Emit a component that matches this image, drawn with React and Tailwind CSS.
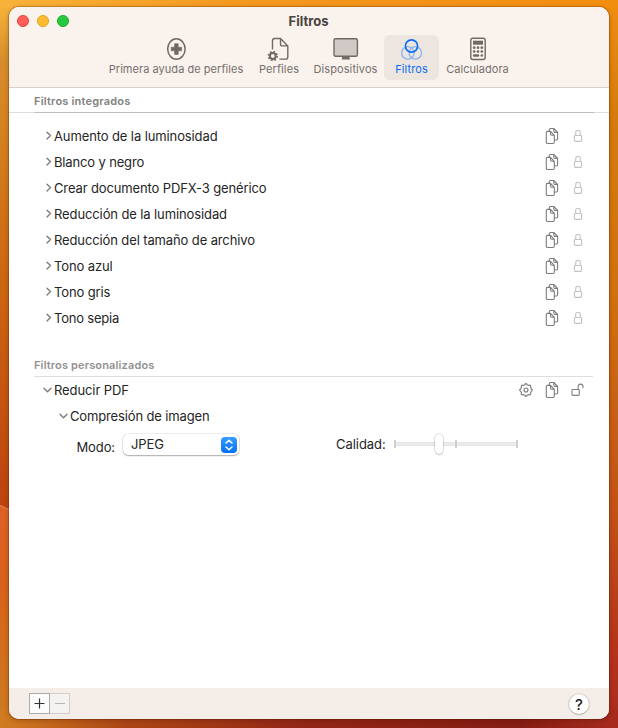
import React from "react";

const ROWS = [
  ["Aumento de la luminosidad", "tracking-[-0.11px]"],
  ["Blanco y negro", "tracking-[-0.15px]"],
  ["Crear documento PDFX-3 genérico", "tracking-[-0.13px]"],
  ["Reducción de la luminosidad", "tracking-[-0.11px]"],
  ["Reducción del tamaño de archivo", "tracking-[-0.12px]"],
  ["Tono azul", "tracking-[-0.12px]"],
  ["Tono gris", "tracking-[-0.12px]"],
  ["Tono sepia", "tracking-[-0.2px]"],
];

function FirstAidIcon() {
  return (
    <svg width="20" height="24" viewBox="0 0 20 24" fill="none">
      <ellipse cx="10.4" cy="12" rx="8.7" ry="10.2" stroke="#6f6a65" strokeWidth="1.5" />
      <path d="M8.6 6.7h3.6v3.6h3.4v3.5h-3.4v3.6H8.6v-3.6H5.2v-3.5h3.4z" fill="#6f6a65" stroke="#6f6a65" strokeWidth=".6" strokeLinejoin="round" />
    </svg>
  );
}

function ProfileIcon() {
  return (
    <svg width="24" height="26" viewBox="0 0 24 26" fill="none" stroke="#6f6a65">
      <path d="M5.500 13.500V4.700Q5.500 2.500 7.700 2.500H13.500l7.300 7.400v11q0 2.200-2.200 2.200H12.500M13.500 2.500v5.400q0 2 2 2h5.300" strokeWidth="1.4" strokeLinejoin="round" />
      <circle cx="5.800" cy="20" r="2.900" strokeWidth="2" />
      <circle cx="5.800" cy="20" r="4.400" strokeWidth="1.600" strokeDasharray="1.7 1.756" />
    </svg>
  );
}

function DisplayIcon() {
  return (
    <svg width="26" height="24" viewBox="0 0 26 24">
      <path d="M9.500 19h6.600l.9 3.600H8.600z" fill="#6f6a65" />
      <rect x="1" y="1.700" width="23.400" height="17.500" rx="1.500" fill="#d1c9c5" stroke="#6f6a65" strokeWidth="1.4" />
    </svg>
  );
}

function FiltersIcon() {
  return (
    <svg width="22" height="24" viewBox="0 0 22 24" fill="none" strokeWidth="1.3">
      <circle cx="6.900" cy="15.900" r="6.200" stroke="#8cb4ee" />
      <circle cx="14.300" cy="15.900" r="6.200" stroke="#8cb4ee" />
      <circle cx="10.500" cy="9" r="6.100" stroke="#0a6df0" strokeWidth="1.6" />
    </svg>
  );
}

function CalculatorIcon() {
  return (
    <svg width="18" height="24" viewBox="0 0 18 24" fill="#6f6a65">
      <rect x="1.8" y="1.2" width="14.4" height="21.3" rx="2" fill="none" stroke="#6f6a65" strokeWidth="1.4" />
      <rect x="4" y="3.7" width="10" height="4" />
      {[10.7, 14.5].map((y) =>
        [5.2, 9, 12.8].map((x) => <circle key={`${x}-${y}`} cx={x} cy={y} r="1.35" />)
      )}
      <rect x="3.9" y="17.2" width="6.3" height="2.5" rx="1.2" />
      <circle cx="12.8" cy="18.5" r="1.3" />
    </svg>
  );
}

function CopyIcon() {
  return (
    <svg className="shrink-0" width="14" height="18" viewBox="0 0 14 18" fill="none" stroke="#7b7b7b" strokeWidth="1.100" strokeLinejoin="round">
      <path d="M4.300 4V2.700q0-1.200 1.200-1.200h3.300l3.800 3.900v6.400q0 1.200-1.200 1.200H9.300M8.800 1.500v2.700q0 1.200 1.200 1.200h2.600" />
      <path d="M1.300 5.600q0-1.200 1.200-1.200h3L9.300 8.300v7q0 1.200-1.200 1.200H2.500Q1.300 16.500 1.300 15.300zM5.500 4.400V7.100q0 1.200 1.200 1.200H9.300" fill="#fff" />
    </svg>
  );
}

function LockIcon() {
  return (
    <svg className="shrink-0" width="10" height="14" viewBox="0 0 10 14" fill="none" stroke="#c3c3c3" strokeWidth="1.100">
      <rect x="1.400" y="6.500" width="7.200" height="5.900" rx=".8" />
      <path d="M2.700 6.500V3.600a2.300 2.300 0 0 1 4.600 0v2.900" />
    </svg>
  );
}

function UnlockIcon() {
  return (
    <svg className="shrink-0" width="13" height="14" viewBox="0 0 13 14" fill="none" stroke="#808080" strokeWidth="1.100">
      <rect x="1" y="6.500" width="7.300" height="5.900" rx=".8" />
      <path d="M7.200 6.500V3.500a2.400 2.400 0 0 1 4.800 0v1.700" />
    </svg>
  );
}

function GearIcon() {
  return (
    <svg className="shrink-0" width="14" height="14" viewBox="0 0 14 14" fill="none" stroke="#7b7b7b" strokeWidth="1.100" strokeLinejoin="round">
      {[0, 45, 90, 135, 180, 225, 270, 315].map((a) => (
        <path key={a} transform={`rotate(${a} 7 7)`} d="M4.900 1.950L5.900 1.850Q6 .7 7 .6Q8 .7 8.100 1.850L9.100 1.950" />
      ))}
      <circle cx="7" cy="7" r="2" />
    </svg>
  );
}

function Chevron({ open }) {
  return open ? (
    <svg className="shrink-0" width="10" height="8" viewBox="0 0 10 8" fill="none" stroke="#7b7b7b" strokeWidth="1.400" strokeLinecap="round" strokeLinejoin="round">
      <path d="M2 2.200L5.500 5.700 9 2.200" />
    </svg>
  ) : (
    <svg className="shrink-0" width="8" height="10" viewBox="0 0 8 10" fill="none" stroke="#7b7b7b" strokeWidth="1.400" strokeLinecap="round" strokeLinejoin="round">
      <path d="M3 1.200L6.500 4.600 3 8" />
    </svg>
  );
}

function Tool({ icon, label, className }) {
  return (
    <div className={`flex h-[45px] shrink-0 flex-col items-center rounded-[6px] text-[11px] leading-[14px] ${className}`}>
      <div className="flex h-[27px] items-center justify-center">{icon}</div>
      <span className="whitespace-nowrap">{label}</span>
    </div>
  );
}

function Wallpaper() {
  return (
    <svg className="absolute inset-0" width="618" height="728" viewBox="0 0 618 728">
      <defs>
        <linearGradient id="top" x1="0" x2="1" y1="0" y2="0">
          <stop offset="0" stopColor="#f8b23a" />
          <stop offset=".4" stopColor="#f4981e" />
          <stop offset="1" stopColor="#f28e0f" />
        </linearGradient>
        <linearGradient id="left" x1="0" x2="0" y1="0" y2="1">
          <stop offset="0" stopColor="#f5b03a" />
          <stop offset=".1" stopColor="#d88e2b" />
          <stop offset=".5" stopColor="#ce6a12" />
          <stop offset="1" stopColor="#bd430e" />
        </linearGradient>
        <linearGradient id="lower" x1="0" x2="0" y1="0" y2="1">
          <stop offset="0" stopColor="#dd6126" />
          <stop offset=".35" stopColor="#d8611a" />
          <stop offset="1" stopColor="#cc7d20" />
        </linearGradient>
        <linearGradient id="right" x1="0" x2="0" y1="0" y2="1">
          <stop offset="0" stopColor="#f08c10" />
          <stop offset=".15" stopColor="#d87b0c" />
          <stop offset=".4" stopColor="#d3700f" />
          <stop offset=".7" stopColor="#c25216" />
          <stop offset=".88" stopColor="#b5351b" />
          <stop offset="1" stopColor="#aa291e" />
        </linearGradient>
        <linearGradient id="bottom" x1="0" x2="1" y1="0" y2="0">
          <stop offset="0" stopColor="#d17c20" />
          <stop offset=".2" stopColor="#ac4614" />
          <stop offset=".5" stopColor="#912616" />
          <stop offset=".84" stopColor="#851c12" />
          <stop offset="1" stopColor="#a82a1d" />
        </linearGradient>
      </defs>
      <rect width="618" height="30" fill="url(#top)" />
      <rect y="8" width="30" height="500" fill="url(#left)" />
      <path d="M0 505L30 520V728H0z" fill="url(#lower)" />
      <path d="M0 505.500L12 511.500" stroke="#dc7b45" strokeWidth="1.500" />
      <rect x="590" y="8" width="28" height="720" fill="url(#right)" />
      <rect y="710" width="618" height="18" fill="url(#bottom)" />
    </svg>
  );
}

export default function App() {
  return (
    <div className="relative h-[728px] w-[618px] overflow-hidden bg-[#d3700f] font-['Inter','Liberation_Sans',sans-serif]">
      <Wallpaper />
      <div className="relative h-full pt-[7px] pl-[9px]">
        <main className="flex h-[712px] w-[600px] flex-col overflow-hidden rounded-[10px] bg-white text-[13px] text-[#252525] shadow-[0_0_0_1px_rgba(70,25,0,0.22),0_1px_5px_rgba(60,15,0,0.3)]">
          <header className="flex h-[81px] shrink-0 flex-col border-b border-[#d5d1cf] bg-[#faf2ed]">
            <div className="relative flex h-[28px] items-center justify-center">
              <div className="absolute top-[8px] left-[8px] flex gap-[8px]">
                <i className="size-3 rounded-full border border-[#e0443e] bg-[#ff5f57]" />
                <i className="size-3 rounded-full border border-[#dea123] bg-[#febc2e]" />
                <i className="size-3 rounded-full border border-[#1aab29] bg-[#28c840]" />
              </div>
              <h1 className="pr-[1px] text-[13px] leading-[16px] font-bold text-[#494440]">Filtros</h1>
            </div>
            <nav className="flex pl-[92px] text-[#74706d]">
              <Tool icon={<FirstAidIcon />} label="Primera ayuda de perfiles" className="w-[150px] tracking-[0.04px]" />
              <Tool icon={<ProfileIcon />} label="Perfiles" className="w-[56px] tracking-[0.1px]" />
              <Tool icon={<DisplayIcon />} label="Dispositivos" className="w-[77px] tracking-[0.1px]" />
              <Tool icon={<FiltersIcon />} label="Filtros" className="w-[55px] bg-[#ece5e0] tracking-[0.1px] text-[#0a6df0]" />
              <Tool icon={<CalculatorIcon />} label="Calculadora" className="w-[77px] tracking-[0.04px]" />
            </nav>
          </header>

          <div className="flex h-[25px] shrink-0 flex-col">
            <h2 className="h-[24px] pl-[25px] text-[11px] leading-[26px] font-semibold tracking-[0.2px] text-[#828282]">Filtros integrados</h2>
            <div className="flex h-px bg-[#dedede]"><div className="ml-[25px] w-[560px] bg-[#bebebe]" /></div>
          </div>
          <ul className="mt-[10px]">
            {ROWS.map(([name, tracking]) => (
              <li key={name} className="flex h-[26px] items-center pr-[26px] pl-[35px]">
                <span className="-mt-[1px]"><Chevron /></span>
                <span className={`ml-[2px] grow leading-[20px] ${tracking}`}>{name}</span>
                <CopyIcon />
                <span className="ml-[14px]"><LockIcon /></span>
              </li>
            ))}
          </ul>

          <h2 className="mt-[23px] h-[22px] pl-[25px] text-[11px] leading-[22px] font-semibold tracking-[0.14px] text-[#929292]">Filtros personalizados</h2>
          <div className="ml-[25px] h-px w-[559px] shrink-0 bg-[#dedede]" />
          <div className="flex h-[26px] items-center pr-[25px] pl-[33px]">
            <Chevron open />
            <span className="ml-[2px] grow pt-[2px] tracking-[-0.1px]">Reducir PDF</span>
            <GearIcon />
            <span className="ml-[12px]"><CopyIcon /></span>
            <span className="ml-[12px]"><UnlockIcon /></span>
          </div>
          <div className="flex h-[26px] items-center pl-[49px]">
            <Chevron open />
            <span className="ml-[2px] pt-[2px] tracking-[-0.14px]">Compresión de imagen</span>
          </div>
          <div className="mt-[5px] flex h-[24px] items-start">
            <span className="mt-[5px] w-[106px] text-right leading-[16px] tracking-[-0.1px]">Modo:</span>
            <button className="ml-[8px] flex h-[21px] w-[116px] items-center justify-between rounded-[5px] bg-white pr-[2px] pl-[8px] shadow-[0_0_0_0.5px_rgba(0,0,0,0.14),0_1px_1.5px_rgba(0,0,0,0.28)]">
              <span className="tracking-[-0.1px]">JPEG</span>
              <span className="flex size-4 items-center justify-center rounded-[4px] bg-linear-to-b from-[#369cff] to-[#0070f5]">
                <svg width="10" height="14" viewBox="0 0 10 14" fill="none" stroke="#fff" strokeWidth="1.500" strokeLinecap="round" strokeLinejoin="round">
                  <path d="M2 5L5 2.200 8 5M2 9L5 11.800 8 9" />
                </svg>
              </span>
            </button>
            <span className="mt-[2px] ml-[97px] w-[50px] leading-[16px] tracking-[-0.05px]">Calidad:</span>
            <div className="relative mt-[8px] ml-[8px] h-[4px] w-[124px] border-y border-[#e5e5e5] bg-[#ececec]">
              <i className="absolute -top-[3px] left-0 h-[8px] w-[2px] bg-[#d0d0d0]" />
              <i className="absolute -top-[3px] left-[61px] h-[8px] w-[2px] bg-[#d0d0d0]" />
              <i className="absolute -top-[3px] right-0 h-[8px] w-[2px] bg-[#d0d0d0]" />
              <i className="absolute -top-[9px] left-[41px] h-[20px] w-[8px] rounded-full bg-white shadow-[0_0_0_0.5px_rgba(0,0,0,0.15),0_0.5px_1.5px_rgba(0,0,0,0.3)]" />
            </div>
          </div>

          <footer className="mt-auto flex h-[31px] shrink-0 items-start justify-between bg-[#f4ede8] pt-[5px] pr-[20px] pl-[20px]">
            <div className="flex">
              <button className="flex h-[21px] w-[21px] items-center justify-center border border-[#acacac] bg-[#fcfcfc]">
                <svg width="11" height="11" viewBox="0 0 11 11"><path d="M5.500 .5v10M.5 5.500h10" stroke="#333" strokeWidth="1.200" /></svg>
              </button>
              <button className="flex h-[21px] w-[20px] items-center justify-center border border-l-0 border-[#d1cdca] bg-[#f6f2ef]">
                <svg width="10" height="11" viewBox="0 0 10 11"><path d="M0 5.500h10" stroke="#b7b3b0" strokeWidth="1.200" /></svg>
              </button>
            </div>
            <button className="mt-[1px] flex size-5 items-center justify-center rounded-full bg-white text-[15px] leading-none font-medium shadow-[0_0_0_0.5px_rgba(0,0,0,0.12),0_0.5px_2px_rgba(0,0,0,0.3)]">?</button>
          </footer>
        </main>
      </div>
    </div>
  );
}
